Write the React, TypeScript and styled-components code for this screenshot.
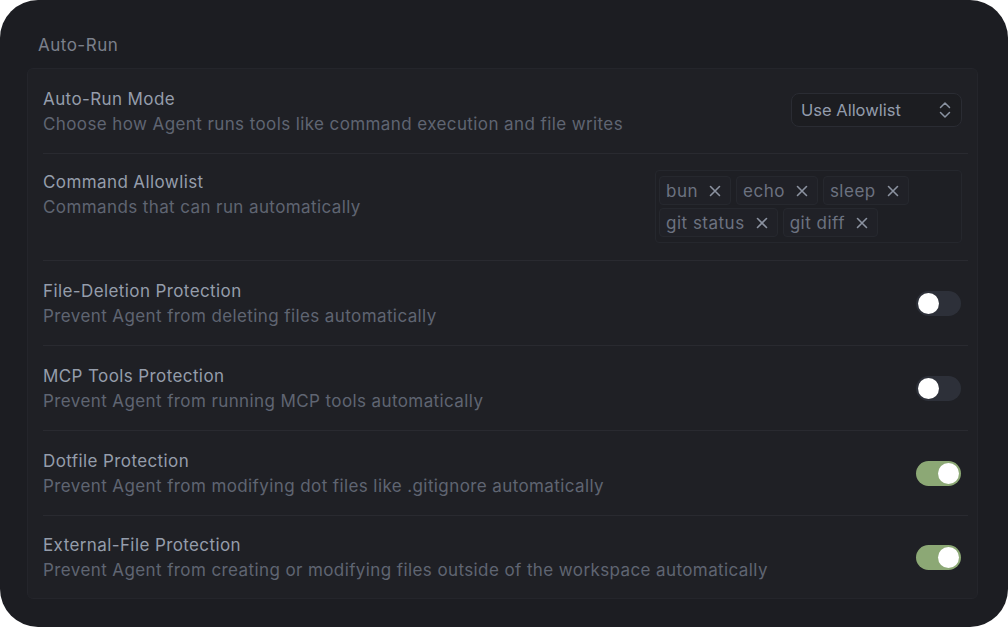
import React from "react";
import styled, { createGlobalStyle } from "styled-components";

const Global = createGlobalStyle`
  html, body { margin: 0; padding: 0; background: #ffffff; }
  body { font-family: Inter, "Noto Sans", sans-serif; -webkit-font-smoothing: antialiased; }
  * { box-sizing: border-box; }
`;

const Window = styled.div`
  width: 1008px;
  height: 627px;
  background: #1c1d22;
  border-radius: 38px;
  padding: 34px 30px 0 27px;
  display: flex;
  flex-direction: column;
  overflow: hidden;
`;

const Heading = styled.div`
  font-size: 17px;
  letter-spacing: 0.5px;
  line-height: 22px;
  color: #7b808b;
  padding-left: 11px;
  margin-bottom: 12px;
`;

const Card = styled.div`
  background: #1f2025;
  border: 1px solid #24252b;
  border-radius: 6px;
  padding: 0 9px 0 15px;
  display: flex;
  flex-direction: column;
`;

const Row = styled.div<{ $h: number; $last?: boolean }>`
  height: ${(p) => p.$h}px;
  display: flex;
  align-items: ${(p) => (p.$h > 90 ? "flex-start" : "center")};
  padding-top: ${(p) => (p.$h > 90 ? 17 : 0)}px;
  justify-content: space-between;
  border-bottom: ${(p) => (p.$last ? "none" : "1px solid #292a30")};
`;

const Texts = styled.div`
  display: flex;
  flex-direction: column;
  gap: 3px;
`;

const Title = styled.div`
  font-size: 17px;
  letter-spacing: 0.4px;
  line-height: 22px;
  color: #959dab;
`;

const Desc = styled.div`
  font-size: 17px;
  letter-spacing: 0.4px;
  line-height: 22px;
  color: #5f6572;
`;

const Select = styled.div`
  width: 171px;
  height: 34px;
  margin-top: -2px;
  margin-right: 6px;
  border: 1px solid #2a2c33;
  border-radius: 8px;
  background: #1c1d21;
  display: flex;
  align-items: center;
  justify-content: space-between;
  padding: 0 9px 0 9px;
  font-size: 16.5px;
  color: #939cac;
`;

const TagBox = styled.div`
  width: 307px;
  margin-top: -1px;
  margin-right: 6px;
  border: 1px solid #25272d;
  border-radius: 4px;
  padding: 5px 3px;
  display: flex;
  flex-wrap: wrap;
  gap: 3px 5px;
  background: #1e1f24;
`;

const Tag = styled.div`
  height: 29px;
  display: flex;
  align-items: center;
  gap: 11px;
  padding: 0 9px 0 6px;
  border: 1px solid #26282e;
  border-radius: 4px;
  background: #202127;
  font-size: 17px;
  letter-spacing: 0.5px;
  color: #6c7280;
`;

const Toggle = styled.div<{ $on?: boolean }>`
  width: 45px;
  height: 25px;
  margin-right: 7px;
  border-radius: 13px;
  background: ${(p) => (p.$on ? "#8ca875" : "#2d3039")};
  display: flex;
  align-items: center;
  justify-content: ${(p) => (p.$on ? "flex-end" : "flex-start")};
  padding: 0 2px;
`;

const Knob = styled.div`
  width: 21px;
  height: 21px;
  border-radius: 50%;
  background: #ffffff;
`;

const Chevrons = () => (
  <svg width="14" height="20" viewBox="0 0 14 20" fill="none" stroke="#8a93a2" strokeWidth="1.5" strokeLinecap="round" strokeLinejoin="round">
    <path d="M2.5 7.5 L7 3 L11.5 7.5" />
    <path d="M2.5 12.5 L7 17 L11.5 12.5" />
  </svg>
);

const XIcon = () => (
  <svg width="12" height="12" viewBox="0 0 12 12" stroke="#8b92a0" strokeWidth="1.6" strokeLinecap="round">
    <path d="M1.5 1.5 L10.5 10.5 M10.5 1.5 L1.5 10.5" />
  </svg>
);

const toggles = [
  { t: "File-Deletion Protection", d: "Prevent Agent from deleting files automatically", on: false },
  { t: "MCP Tools Protection", d: "Prevent Agent from running MCP tools automatically", on: false },
  { t: "Dotfile Protection", d: "Prevent Agent from modifying dot files like .gitignore automatically", on: true },
  { t: "External-File Protection", d: "Prevent Agent from creating or modifying files outside of the workspace automatically", on: true },
];

export default function App() {
  return (
    <>
      <Global />
      <Window>
        <Heading>Auto-Run</Heading>
        <Card>
          <Row $h={85}>
            <Texts>
              <Title>Auto-Run Mode</Title>
              <Desc>Choose how Agent runs tools like command execution and file writes</Desc>
            </Texts>
            <Select>
              <span>Use Allowlist</span>
              <Chevrons />
            </Select>
          </Row>
          <Row $h={107}>
            <Texts>
              <Title>Command Allowlist</Title>
              <Desc>Commands that can run automatically</Desc>
            </Texts>
            <TagBox>
              {["bun", "echo", "sleep", "git status", "git diff"].map((c) => (
                <Tag key={c}>
                  {c}
                  <XIcon />
                </Tag>
              ))}
            </TagBox>
          </Row>
          {toggles.map((r, i) => {
            const last = i === toggles.length - 1;
            return (
              <Row key={r.t} $h={last ? 82 : 85} $last={last}>
                <Texts>
                  <Title>{r.t}</Title>
                  <Desc>{r.d}</Desc>
                </Texts>
                <Toggle $on={r.on}>
                  <Knob />
                </Toggle>
              </Row>
            );
          })}
        </Card>
      </Window>
    </>
  );
}
